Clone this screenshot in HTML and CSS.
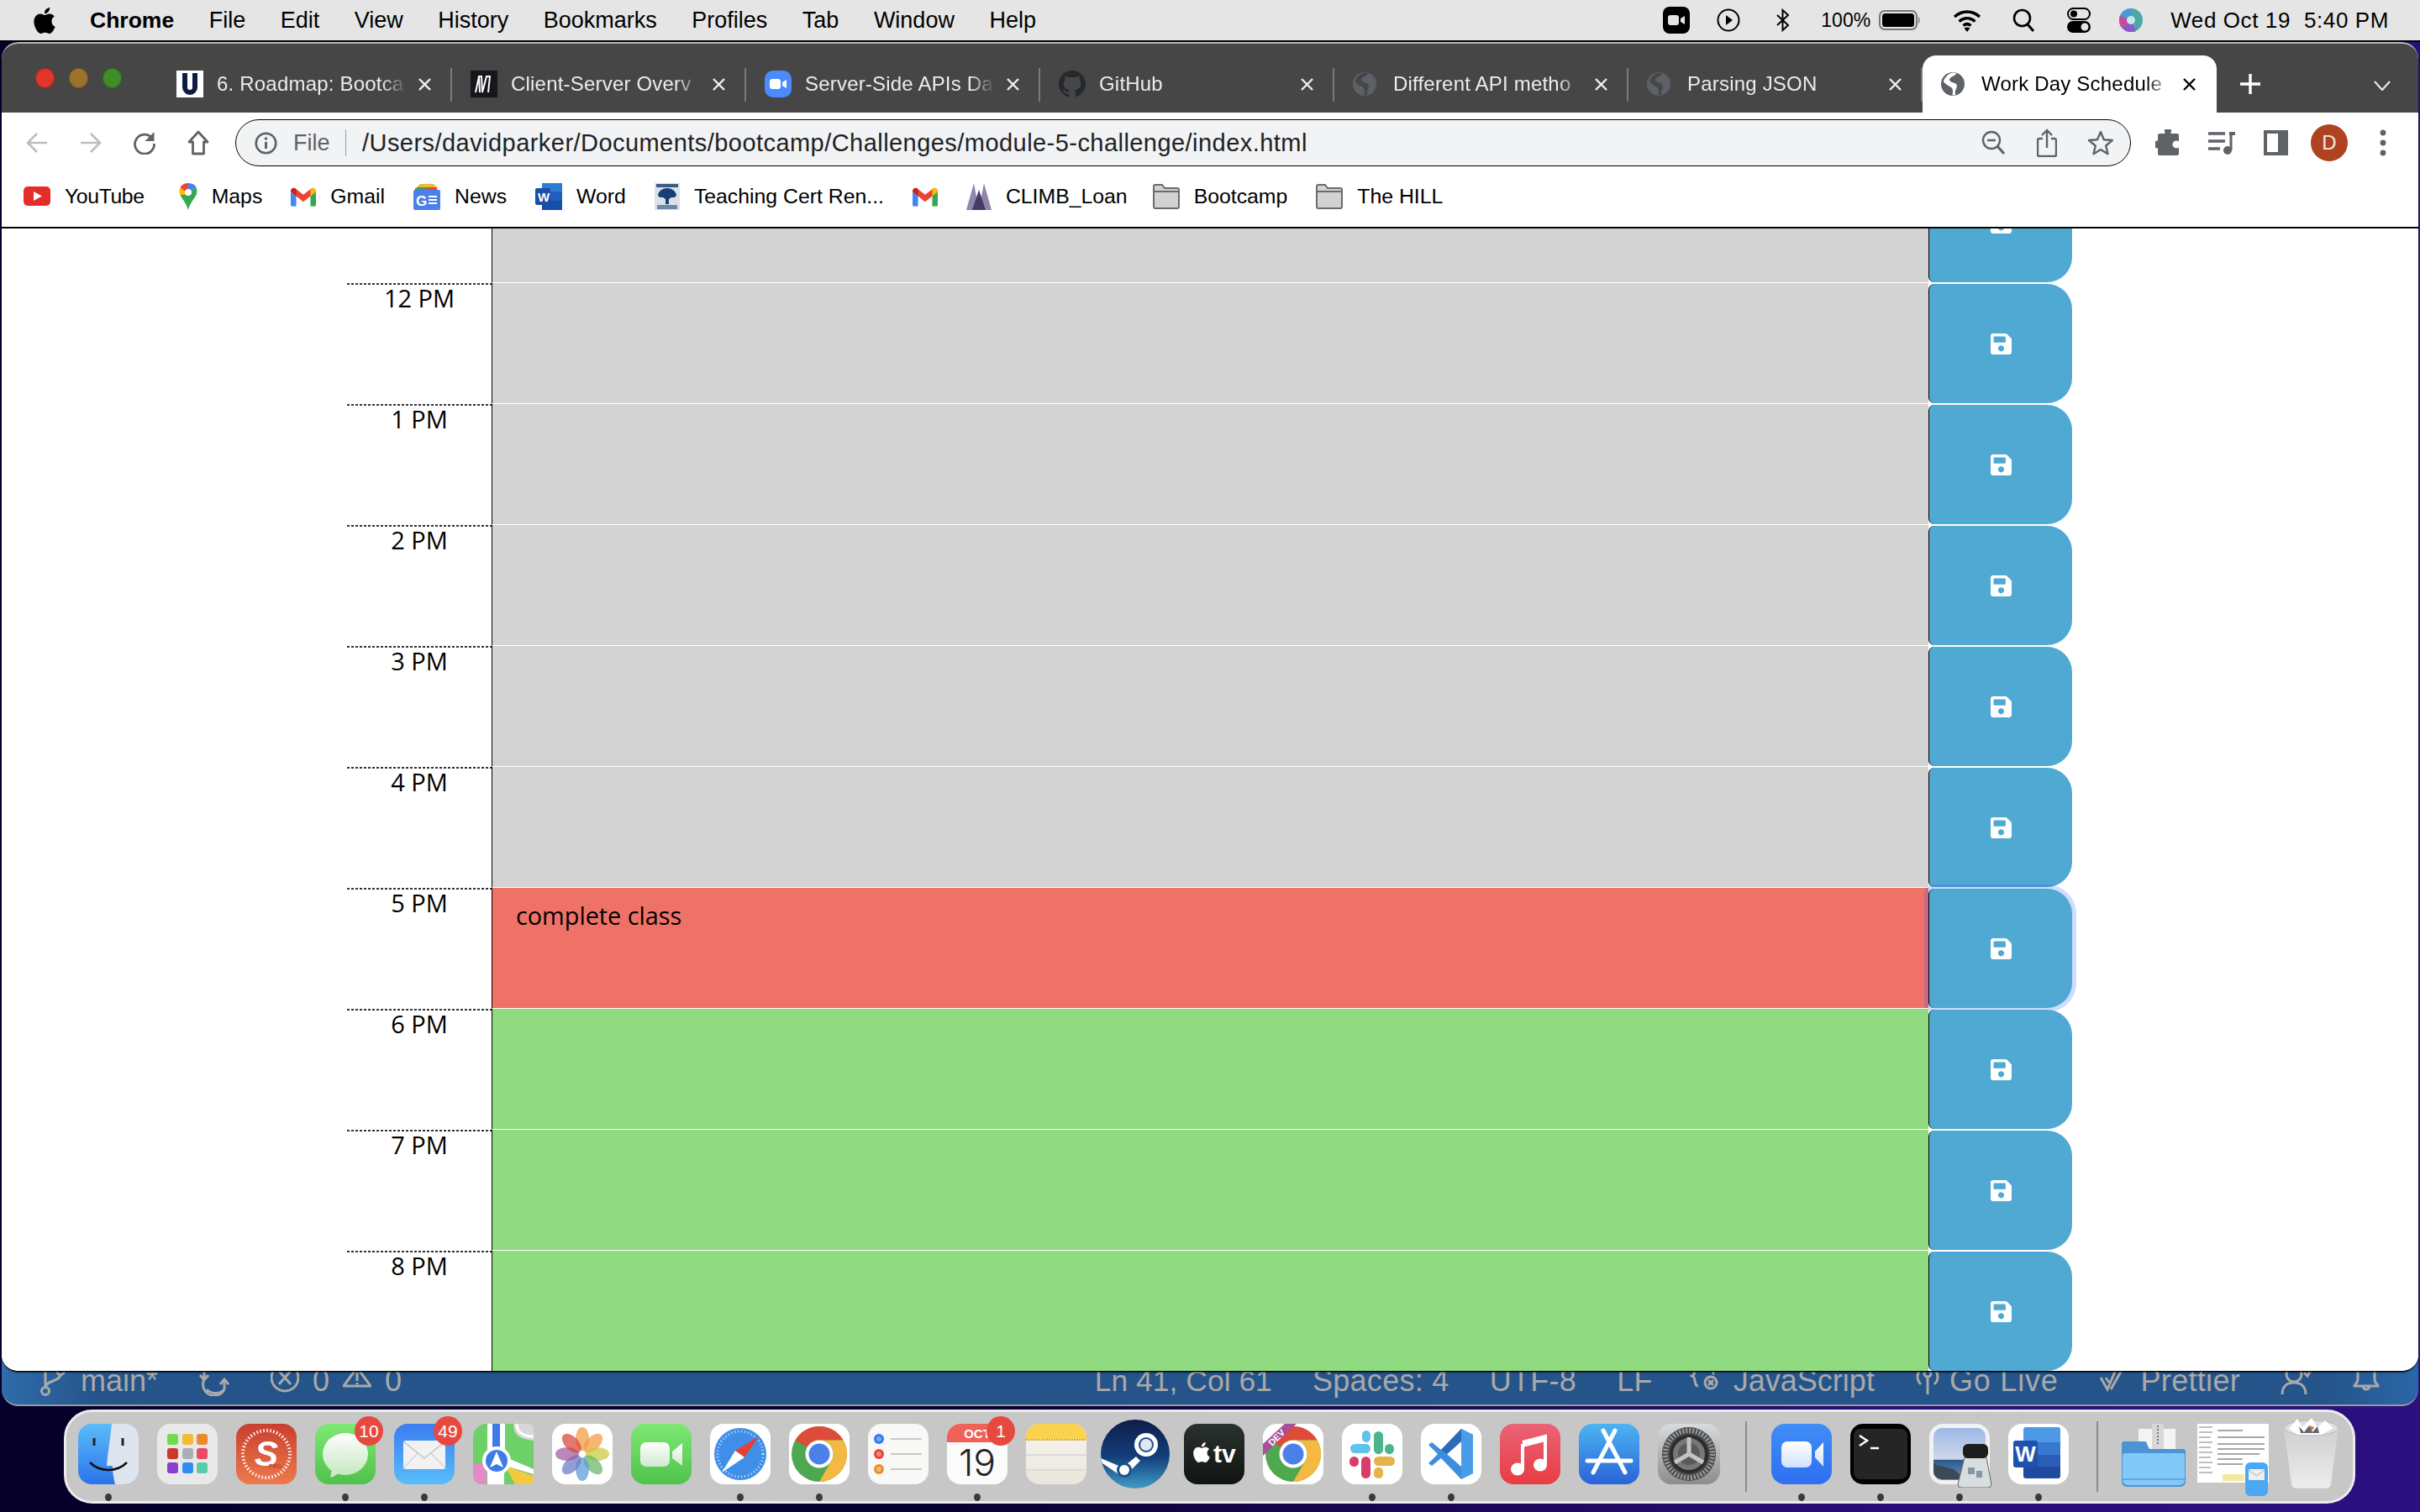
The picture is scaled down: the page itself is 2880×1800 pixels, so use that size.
FILE: index.html
```html
<!DOCTYPE html>
<html lang="en">
<head>
<meta charset="utf-8">
<title>Work Day Scheduler</title>
<link rel="stylesheet" href="styles.css">
</head>
<body>
<svg class="defs" width="0" height="0">
  <defs>
    <symbol id="globe" viewBox="0 0 16 16"><circle class="gb" cx="8" cy="8" r="8"/><path class="gc" d="M10.5 .8C9.5 2.6 6.6 2.8 5.8 4.6 5.2 6.2 7.6 6.8 9.6 7.6c1.6.7 1.4 2.6.5 4.1-.6 1-.7 2.400-.1 3.600l-2.100.500c-.2-1.800.4-3.100-.1-4.400C7.300 10 5.600 9.700 4.600 9 3.400 8.200 2.400 7.400 1.600 6.200 2.600 3.400 5 .8 8 .3c1-.1 1.700.1 2.500.5z"/></symbol>
    <symbol id="close" viewBox="0 0 17 15"><path d="M2 1l13 13M15 1L2 14" fill="none" stroke="currentColor" stroke-width="2.400"/></symbol>
    <symbol id="save" viewBox="0 0 448 512"><path fill="#fff" d="M433.941 129.941l-83.882-83.882A48 48 0 0 0 316.118 32H48C21.49 32 0 53.49 0 80v352c0 26.51 21.49 48 48 48h352c26.51 0 48-21.49 48-48V163.882a48 48 0 0 0-14.059-33.941zM224 416c-35.346 0-64-28.654-64-64 0-35.346 28.654-64 64-64s64 28.654 64 64c0 35.346-28.654 64-64 64zm96-304.520V212c0 6.627-5.373 12-12 12H76c-6.627 0-12-5.373-12-12V108c0-6.627 5.373-12 12-12h228.520c3.183 0 6.235 1.264 8.485 3.515l3.480 3.480A11.996 11.996 0 0 1 320 111.480z"/></symbol>
    <symbol id="gmail" viewBox="0 0 32 24"><path fill="#4285f4" d="M0 5v17a2 2 0 0 0 2 2h5V11z"/><path fill="#34a853" d="M32 5v17a2 2 0 0 1-2 2h-5V11z"/><path fill="#ea4335" d="M0 5c0-4 4-6 7-3l9 7 9-7c3-3 7-1 7 3l-7 6-9 7-9-7z"/><path fill="#fbbc04" d="M25 2c3-3 7-1 7 3l-7 6z"/><path fill="#c5221f" d="M0 5c0-4 4-6 7-3v9z"/></symbol>
    <symbol id="folder" viewBox="0 0 32 30"><path fill="#d2d2d2" stroke="#6b6b6b" stroke-width="2" d="M1 3a2 2 0 0 1 2-2h8l3 4h15a2 2 0 0 1 2 2v20a2 2 0 0 1-2 2H3a2 2 0 0 1-2-2z"/><path stroke="#6b6b6b" stroke-width="2" d="M1 9h30"/></symbol>
    <symbol id="chrome" viewBox="0 0 72 72"><circle cx="36" cy="36" r="33" fill="#4da850"/><path fill="#dd4b39" d="M7.400 19.500A33 33 0 0 1 64.600 19.500H36A16.500 16.500 0 0 0 21.700 27.700z"/><path fill="#f4b942" d="M64.600 19.500H36A16.500 16.500 0 0 1 50.300 44.250L36 69A33 33 0 0 0 64.600 19.500z"/><circle cx="36" cy="36" r="16.500" fill="#fff"/><circle cx="36" cy="36" r="12.500" fill="#4a80e8"/></symbol>
    <linearGradient id="gBlue" x1="0" y1="0" x2="0" y2="1"><stop offset="0" stop-color="#3c7cf0"/><stop offset="1" stop-color="#57bdfb"/></linearGradient>
    <linearGradient id="gGreen" x1="0" y1="0" x2="0" y2="1"><stop offset="0" stop-color="#7fe874"/><stop offset="1" stop-color="#4fc24b"/></linearGradient>
    <linearGradient id="gBub" x1="0" y1="0" x2="0" y2="1"><stop offset="0" stop-color="#fff"/><stop offset="1" stop-color="#c4e8c0"/></linearGradient>
    <linearGradient id="gS" x1="0" y1="0" x2="0" y2="1"><stop offset="0" stop-color="#c8402f"/><stop offset="1" stop-color="#ee7a4c"/></linearGradient>
    <linearGradient id="gFinder" x1="0" y1="0" x2="0" y2="1"><stop offset="0" stop-color="#5cbcf8"/><stop offset="1" stop-color="#2a74ea"/></linearGradient>
    <linearGradient id="gSteam" x1="0" y1="0" x2="0" y2="1"><stop offset="0" stop-color="#0c1d48"/><stop offset=".55" stop-color="#14407c"/><stop offset="1" stop-color="#3f9cc8"/></linearGradient>
    <linearGradient id="gMusic" x1="0" y1="0" x2="0" y2="1"><stop offset="0" stop-color="#ea6478"/><stop offset="1" stop-color="#e83c42"/></linearGradient>
    <linearGradient id="gStore" x1="0" y1="0" x2="0" y2="1"><stop offset="0" stop-color="#4cb4f2"/><stop offset="1" stop-color="#2a62d8"/></linearGradient>
    <linearGradient id="gGear" x1="0" y1="0" x2="0" y2="1"><stop offset="0" stop-color="#d8dcde"/><stop offset="1" stop-color="#8a8c8e"/></linearGradient>
    <linearGradient id="gZoom" x1="0" y1="0" x2="0" y2="1"><stop offset="0" stop-color="#3f8ef8"/><stop offset="1" stop-color="#2e6ff0"/></linearGradient>
    <linearGradient id="gSky" x1="0" y1="0" x2="0" y2="1"><stop offset="0" stop-color="#9cb8e8"/><stop offset=".6" stop-color="#cfd8e8"/><stop offset=".62" stop-color="#2a5a90"/><stop offset="1" stop-color="#6a93b0"/></linearGradient>
    <linearGradient id="gTrash" x1="0" y1="0" x2="0" y2="1"><stop offset="0" stop-color="#cfcfcf"/><stop offset="1" stop-color="#ededed"/></linearGradient>
    <linearGradient id="gTv" x1="0" y1="0" x2="0" y2="1"><stop offset="0" stop-color="#2a322e"/><stop offset="1" stop-color="#101412"/></linearGradient>
    <linearGradient id="gNotes" x1="0" y1="0" x2="0" y2="1"><stop offset="0" stop-color="#f7f5ee"/><stop offset="1" stop-color="#e9e6dc"/></linearGradient>
    <linearGradient id="gFace" x1="0" y1="0" x2="0" y2="1"><stop offset="0" stop-color="#fff"/><stop offset="1" stop-color="#cfe9d0"/></linearGradient>
    <linearGradient id="gZc" x1="0" y1="0" x2="0" y2="1"><stop offset="0" stop-color="#fff"/><stop offset="1" stop-color="#cfe2fb"/></linearGradient>
  </defs>
</svg>

<header class="menubar">
  <svg class="apple" viewBox="2 0 20 24" width="26" height="31"><path fill="#000" d="M12.152 6.896c-.948 0-2.415-1.078-3.960-1.040-2.040.027-3.910 1.183-4.961 3.014-2.117 3.675-.546 9.103 1.519 12.090 1.013 1.454 2.208 3.090 3.792 3.039 1.520-.065 2.090-.987 3.935-.987 1.831 0 2.350.987 3.960.948 1.637-.026 2.676-1.480 3.676-2.948 1.156-1.688 1.636-3.325 1.662-3.415-.039-.013-3.182-1.221-3.220-4.857-.026-3.040 2.480-4.494 2.597-4.559-1.429-2.090-3.623-2.324-4.390-2.376-2-.156-3.675 1.090-4.610 1.090zM15.530 3.830c.843-1.012 1.400-2.427 1.245-3.830-1.207.052-2.662.805-3.532 1.818-.780.896-1.454 2.338-1.273 3.714 1.338.104 2.715-.688 3.559-1.701"/></svg>
  <nav class="menus">
    <span class="menu-app">Chrome</span><span>File</span><span>Edit</span><span>View</span><span>History</span><span>Bookmarks</span><span>Profiles</span><span>Tab</span><span>Window</span><span>Help</span>
  </nav>
  <div class="status-icons">
    <svg class="st-zoom" width="32" height="32" viewBox="0 0 32 32"><rect width="32" height="32" rx="8" fill="#000"/><rect x="6" y="10" width="13" height="12" rx="3" fill="#e5e5e5"/><path fill="#e5e5e5" d="M21 14l5-3v10l-5-3z"/></svg>
    <svg class="st-play" width="28" height="28" viewBox="0 0 28 28"><circle cx="14" cy="14" r="12.500" fill="none" stroke="#000" stroke-width="2"/><path d="M11 8l8 6-8 6z"/></svg>
    <svg class="st-bt" width="18" height="28" viewBox="0 0 18 28"><path d="M2 8l13 12-6.500 6V2L15 8 2 20" fill="none" stroke="#000" stroke-width="2"/></svg>
    <span class="st-pct">100%</span>
    <svg class="st-batt" width="50" height="24" viewBox="0 0 50 24"><rect x="1" y="1" width="44" height="22" rx="6" fill="none" stroke="#777" stroke-width="2"/><rect x="4" y="4" width="38" height="16" rx="3.500" fill="#000"/><path d="M47 8c2 1 2 7 0 8z" fill="#777"/></svg>
    <svg class="st-wifi" width="36" height="28" viewBox="0 0 36 28"><path d="M3 10c9-8 21-8 30 0M8.500 15.500c6-5 13-5 19 0M13.500 20.500c3-2.500 6-2.500 9 0" fill="none" stroke="#000" stroke-width="3.400"/><path d="M18 28l-3.500-4.500c2-1.300 5-1.300 7 0z"/></svg>
    <svg class="st-search" width="27" height="28" viewBox="0 0 27 28"><circle cx="11.500" cy="11.500" r="9.500" fill="none" stroke="#000" stroke-width="2.600"/><path d="M18 19l7 8" stroke="#000" stroke-width="3"/></svg>
    <svg class="st-cc" width="28" height="30" viewBox="0 0 28 30"><rect x="1" y="1" width="26" height="13" rx="6.500" fill="none" stroke="#000" stroke-width="2"/><circle cx="8" cy="7.500" r="4"/><rect y="16" width="28" height="14" rx="7"/><circle cx="21" cy="23" r="4.500" fill="#e5e5e5"/></svg>
    <svg class="st-siri" width="28" height="28" viewBox="0 0 28 28"><circle cx="14" cy="14" r="14" fill="#4aa8a8"/><path d="M14 0a14 14 0 0 0-13 9l13 5z" fill="#4a9ad8"/><path d="M1 9a14 14 0 0 0 3 15l10-10z" fill="#c84a98"/><path d="M4 24a14 14 0 0 0 16 3l-6-13z" fill="#8a5ac8"/><circle cx="14" cy="14" r="5" fill="#c8e8e8"/></svg>
    <span class="st-date">Wed Oct 19</span>
    <span class="st-time">5:40 PM</span>
  </div>
</header>

<main class="window">
  <div class="tabstrip">
    <div class="lights"><span class="light light-r"></span><span class="light light-y"></span><span class="light light-g"></span></div>
    <div class="tab">
      <svg class="fav" width="32" height="32" viewBox="0 0 32 32"><rect width="32" height="32" fill="#fff"/><path d="M7 3v17a9 9 0 0 0 18 0V3h-6v17a3 3 0 0 1-6 0V3z" fill="#0f1b47"/></svg>
      <span class="title">6. Roadmap: Bootca</span>
      <svg class="x" width="17" height="15"><use href="#close"/></svg>
    </div>
    <div class="tab">
      <svg class="fav" width="32" height="32" viewBox="0 0 32 32"><rect width="32" height="32" fill="#16161d"/><path d="M6 26L10 7h3l1 19 5-19h3l1 0-2 19M10 7l1 19" fill="none" stroke="#fff" stroke-width="2"/></svg>
      <span class="title">Client-Server Overv</span>
      <svg class="x" width="17" height="15"><use href="#close"/></svg>
    </div>
    <div class="tab">
      <svg class="fav" width="32" height="32" viewBox="0 0 32 32"><rect width="32" height="32" rx="10" fill="#4a8cff"/><rect x="6" y="10" width="13" height="12" rx="3" fill="#fff"/><path d="M21 14l5-3v10l-5-3z" fill="#fff"/></svg>
      <span class="title">Server-Side APIs Da</span>
      <svg class="x" width="17" height="15"><use href="#close"/></svg>
    </div>
    <div class="tab">
      <svg class="fav" width="32" height="32" viewBox="0 0 16 16"><path fill="#24292e" d="M8 0C3.580 0 0 3.580 0 8c0 3.540 2.290 6.530 5.470 7.590.400.070.550-.170.550-.380 0-.190-.010-.820-.010-1.490-2.010.370-2.530-.490-2.690-.940-.090-.230-.480-.940-.820-1.130-.280-.150-.680-.520-.010-.530.630-.010 1.080.580 1.230.820.720 1.210 1.870.870 2.330.660.070-.520.280-.870.510-1.070-1.780-.200-3.640-.890-3.640-3.950 0-.870.310-1.590.820-2.150-.080-.200-.360-1.020.080-2.120 0 0 .670-.210 2.200.820.640-.180 1.320-.270 2-.270.680 0 1.360.090 2 .270 1.530-1.040 2.200-.820 2.200-.820.440 1.100.160 1.920.080 2.120.510.560.820 1.270.820 2.150 0 3.070-1.870 3.750-3.650 3.950.290.250.540.730.540 1.480 0 1.070-.010 1.930-.010 2.200 0 .210.150.460.550.380A8.013 8.013 0 0016 8c0-4.420-3.580-8-8-8z"/></svg>
      <span class="title">GitHub</span>
      <svg class="x" width="17" height="15"><use href="#close"/></svg>
    </div>
    <div class="tab">
      <svg class="fav fav-g" width="28" height="32"><use href="#globe"/></svg>
      <span class="title">Different API metho</span>
      <svg class="x" width="17" height="15"><use href="#close"/></svg>
    </div>
    <div class="tab">
      <svg class="fav fav-g" width="28" height="32"><use href="#globe"/></svg>
      <span class="title">Parsing JSON</span>
      <svg class="x" width="17" height="15"><use href="#close"/></svg>
    </div>
    <div class="tab tab-active">
      <svg class="fav fav-g" width="28" height="32"><use href="#globe"/></svg>
      <span class="title">Work Day Schedule</span>
      <svg class="x" width="17" height="15"><use href="#close"/></svg>
    </div>
    <svg class="newtab" width="26" height="26" viewBox="0 0 26 26"><path d="M13 1v24M1 13h24" stroke="#fff" stroke-width="3.400"/></svg>
    <svg class="tabmenu" width="20" height="12" viewBox="0 0 20 12"><path d="M1 1l9 10 9-10" fill="none" stroke="#e8e8e8" stroke-width="2.200"/></svg>
  </div>

  <div class="toolbar">
    <span class="tb-btn"><svg width="26" height="28" viewBox="0 0 26 28"><path d="M25 14H3M13 3L2 14l11 11" fill="none" stroke="#bdbdbd" stroke-width="2.600"/></svg></span>
    <span class="tb-btn"><svg width="26" height="28" viewBox="0 0 26 28"><path d="M1 14h22M13 3l11 11-11 11" fill="none" stroke="#bdbdbd" stroke-width="2.600"/></svg></span>
    <span class="tb-btn"><svg width="28" height="28" viewBox="0 0 28 28"><path d="M23 8.500A11.500 11.500 0 1 0 25.500 15" fill="none" stroke="#5f6368" stroke-width="2.800"/><path d="M25.500 1v11h-11z" fill="#5f6368"/></svg></span>
    <span class="tb-btn"><svg width="26" height="30" viewBox="0 0 26 30"><path d="M13 2L2 14h4.500v14h13V14H24z" fill="none" stroke="#5f6368" stroke-width="2.800" stroke-linejoin="round"/></svg></span>
    <div class="omnibox">
      <svg class="o-info" width="27" height="27" viewBox="0 0 27 27"><circle cx="13.500" cy="13.500" r="11.800" fill="none" stroke="#5f6368" stroke-width="2.600"/><path d="M13.500 12v8" stroke="#5f6368" stroke-width="3"/><circle cx="13.500" cy="8" r="1.800" fill="#5f6368"/></svg>
      <span class="o-file">File</span>
      <span class="o-sep"></span>
      <span class="o-url">/Users/davidparker/Documents/bootcamp/Challenges/module-5-challenge/index.html</span>
      <span class="o-act"><svg width="28" height="30" viewBox="0 0 28 30"><circle cx="12" cy="12" r="10" fill="none" stroke="#5f6368" stroke-width="2.400"/><path d="M7 12h10" stroke="#5f6368" stroke-width="2.400"/><path d="M19 19l8 9" stroke="#5f6368" stroke-width="3"/></svg></span>
      <span class="o-act"><svg width="24" height="34" viewBox="0 0 24 34"><path d="M7 12H3a2 2 0 0 0-2 2v17a2 2 0 0 0 2 2h18a2 2 0 0 0 2-2V14a2 2 0 0 0-2-2h-4M12 23V2M6 8l6-6 6 6" fill="none" stroke="#5f6368" stroke-width="2.400"/></svg></span>
      <span class="o-act"><svg width="30" height="30" viewBox="0 0 30 30"><path d="M15 2l3.800 9.200 10 .8-7.600 6.500 2.300 9.700-8.500-5.200-8.500 5.200 2.300-9.700L.9 12l10-.8z" fill="none" stroke="#5f6368" stroke-width="2.400" stroke-linejoin="round"/></svg></span>
    </div>
    <span class="tb-btn tb-first"><svg width="30" height="32" viewBox="0 0 30 32"><path fill="#5f6368" d="M11 2a4 4 0 0 1 8 0c0 1-.500 2-.500 3H26a2 2 0 0 1 2 2v7c-1 0-2-.600-3-.600a4.500 4.500 0 0 0 0 9c1 0 2-.400 3-.400v7a2 2 0 0 1-2 2H5a2 2 0 0 1-2-2v-7c-1 0 0 .500-1 .500a4.500 4.500 0 0 1 0-9c1 0 0 .500 1 .500V7a2 2 0 0 1 2-2h6.500c0-1-.500-2-.500-3z"/></svg></span>
    <span class="tb-btn"><svg width="32" height="32" viewBox="0 0 32 32"><path d="M0 5h20M0 14h20M0 23h14" stroke="#5f6368" stroke-width="3.400"/><path d="M27 3v22" stroke="#5f6368" stroke-width="3"/><path d="M25 3h7v4h-7z" fill="#5f6368"/><circle cx="23" cy="25" r="5" fill="#5f6368"/></svg></span>
    <span class="tb-btn"><svg width="29" height="30" viewBox="0 0 29 30"><path fill="#5f6368" fill-rule="evenodd" d="M0 0h29v30H0zM4 4v22h13V4z"/></svg></span>
    <span class="tb-btn"><span class="avatar">D</span></span>
    <span class="tb-btn"><svg width="8" height="32" viewBox="0 0 8 32"><circle cx="4" cy="4" r="3.400" fill="#5f6368"/><circle cx="4" cy="16" r="3.400" fill="#5f6368"/><circle cx="4" cy="28" r="3.400" fill="#5f6368"/></svg></span>
  </div>

  <div class="bookmarks">
    <a class="bm bm-yt"><svg width="32" height="24" viewBox="0 0 32 24"><rect width="32" height="23" rx="5" fill="#e52d27"/><path d="M12 6l10 5.500L12 17z" fill="#fff"/></svg>YouTube</a>
    <a class="bm bm-maps"><svg width="22" height="32" viewBox="0 0 22 32"><path fill="#4285f4" d="M11 0c4 0 7 1.500 9 4L11 14z"/><path fill="#ea4335" d="M11 0C7 0 3.500 1.500 1.500 5L11 14z"/><path fill="#fbbc04" d="M1.500 5C0 8 0 11 1.500 14L11 14z"/><path fill="#34a853" d="M1.500 14c2 5 7 9 9.500 18 2.500-9 7-13 9.500-18 1.500-4 1-7-.500-10L11 14z"/><circle cx="11" cy="11" r="4" fill="#fff"/></svg>Maps</a>
    <a class="bm"><svg width="30" height="23" viewBox="0 0 32 24"><use href="#gmail"/></svg>Gmail</a>
    <a class="bm"><svg width="32" height="32" viewBox="0 0 32 32"><path fill="#e9b93a" d="M3 6l5-5h16l5 5z"/><path fill="#ea4335" d="M4 5h24v4H4z"/><path fill="#34a853" d="M2 6h14v4H2z"/><rect y="8" width="32" height="24" rx="2" fill="#4a80e8"/><text class="news-g" x="3" y="27">G</text><path d="M18 16h10M18 20h10M18 24h10" stroke="#fff" stroke-width="2"/></svg>News</a>
    <a class="bm"><svg width="32" height="32" viewBox="0 0 32 32"><path fill="#2b7cd3" d="M8 0h24v10H8z"/><path fill="#1e5fbf" d="M8 10h24v11H8z"/><path fill="#174ea6" d="M8 21h24v11H8z"/><rect y="6" width="18" height="20" rx="2" fill="#1d4fa8"/><text class="word-w" x="3" y="22">W</text></svg>Word</a>
    <a class="bm"><svg width="30" height="32" viewBox="0 0 30 32"><rect width="30" height="32" fill="#d9e1ea"/><rect x="2" y="1" width="26" height="4" fill="#395e8a"/><rect x="3" y="26" width="24" height="5" fill="#6b88a8"/><path d="M15 6c-5 0-10 3-11 8 1 4 4 3 6 3l3 2v6h4v-6l3-2c2 0 5 1 6-3-1-5-6-8-11-8z" fill="#173f74"/></svg>Teaching Cert Ren...</a>
    <a class="bm"><svg width="30" height="23" viewBox="0 0 32 24"><use href="#gmail"/></svg></a>
    <a class="bm"><svg width="30" height="32" viewBox="0 0 30 32"><path fill="#8f85ad" d="M9 0l6 32H0zM21 0l9 32H15z"/><path fill="#453c66" d="M15 8l8 24H7z"/></svg>CLIMB_Loan</a>
    <a class="bm bm-boot"><svg width="32" height="30"><use href="#folder"/></svg>Bootcamp</a>
    <a class="bm"><svg width="32" height="30"><use href="#folder"/></svg>The HILL</a>
  </div>

  <section class="page">
    <div class="rows">
      <div class="row past"><div class="hour">11 AM</div><div class="desc"></div><button class="save" type="button"><svg width="25" height="29"><use href="#save"/></svg></button></div>
      <div class="row past"><div class="hour">12 PM</div><div class="desc"></div><button class="save" type="button"><svg width="25" height="29"><use href="#save"/></svg></button></div>
      <div class="row past"><div class="hour">1 PM</div><div class="desc"></div><button class="save" type="button"><svg width="25" height="29"><use href="#save"/></svg></button></div>
      <div class="row past"><div class="hour">2 PM</div><div class="desc"></div><button class="save" type="button"><svg width="25" height="29"><use href="#save"/></svg></button></div>
      <div class="row past"><div class="hour">3 PM</div><div class="desc"></div><button class="save" type="button"><svg width="25" height="29"><use href="#save"/></svg></button></div>
      <div class="row past"><div class="hour">4 PM</div><div class="desc"></div><button class="save" type="button"><svg width="25" height="29"><use href="#save"/></svg></button></div>
      <div class="row present"><div class="hour">5 PM</div><div class="desc">complete class</div><button class="save save-focus" type="button"><svg width="25" height="29"><use href="#save"/></svg></button></div>
      <div class="row future"><div class="hour">6 PM</div><div class="desc"></div><button class="save" type="button"><svg width="25" height="29"><use href="#save"/></svg></button></div>
      <div class="row future"><div class="hour">7 PM</div><div class="desc"></div><button class="save" type="button"><svg width="25" height="29"><use href="#save"/></svg></button></div>
      <div class="row future"><div class="hour">8 PM</div><div class="desc"></div><button class="save" type="button"><svg width="25" height="29"><use href="#save"/></svg></button></div>
    </div>
  </section>
</main>

<footer class="statusbar">
  <div class="sb-group sb-left">
    <span class="sb-item sb-branch"><svg width="30" height="36" viewBox="0 0 30 36"><circle cx="6" cy="30" r="4.500"/><circle cx="24" cy="6" r="4.500"/><path d="M6 0v25M24 10c0 9-18 7-18 16"/></svg>main*</span>
    <span class="sb-item"><svg width="38" height="36" viewBox="0 0 38 36"><path d="M7 4v12a12 12 0 0 0 24 12M31 28V16M2 11l5 6 5-6M26 22l5-6 5 6M10 28c6 6 16 6 21 0"/></svg></span>
    <span class="sb-item sb-problems"><svg width="34" height="36" viewBox="0 0 34 36"><circle cx="17" cy="14" r="16"/><path d="M10 6l14 16M24 6L10 22"/></svg>0<svg width="34" height="36" viewBox="0 0 34 36"><path d="M17 2L1 24h32zM17 8v10M17 20v2"/></svg>0</span>
  </div>
  <div class="sb-group sb-right">
    <span class="sb-item sb-ln">Ln 41, Col 61</span>
    <span class="sb-item">Spaces: 4</span>
    <span class="sb-item">UTF-8</span>
    <span class="sb-item">LF</span>
    <span class="sb-item sb-js"><svg width="36" height="36" viewBox="0 0 36 36"><path d="M10 0c-6 0-2 10-7 12 5 2 1 12 7 12"/><path d="M24 0c4 1 2 8 5 10"/><circle cx="25" cy="20" r="7"/><path d="M22 17l6 6M28 17l-6 6"/></svg>JavaScript</span>
    <span class="sb-item sb-live"><svg width="30" height="36" viewBox="0 0 30 36"><path d="M7 22a12 12 0 1 1 16 0M15 14v20"/><circle cx="15" cy="9" r="4"/></svg>Go Live</span>
    <span class="sb-item"><svg width="32" height="36" viewBox="0 0 32 36"><path d="M2 14l8 14L22 0M8 14l4 6M14 28L30 0"/></svg>Prettier</span>
    <span class="sb-item"><svg width="38" height="36" viewBox="0 0 38 36"><circle cx="16" cy="10" r="9"/><path d="M2 34c0-10 6-14 14-14s14 4 14 14M28 8l4 4 5-8"/></svg></span>
    <span class="sb-item"><svg width="32" height="36" viewBox="0 0 32 36"><path d="M6 0v16c0 5-4 6-4 8h28c0-2-4-3-4-8V0M12 24a4 4 0 0 0 8 0"/></svg></span>
  </div>
</footer>

<nav class="dock">
  <div class="dock-item on"><svg width="72" height="72" viewBox="0 0 72 72"><rect width="72" height="72" rx="16" fill="url(#gFinder)"/><path d="M40 0h16a16 16 0 0 1 16 16v40a16 16 0 0 1-16 16H44c-2-8-3-14-3-22H34c1-14 4-30 6-50z" fill="#dfe5ef"/><path d="M19 17v9M53 17v9" stroke="#222" stroke-width="3"/><path d="M14 46c12 12 32 12 44 0" fill="none" stroke="#111" stroke-width="2.500"/></svg></div>
  <div class="dock-item"><svg width="72" height="72" viewBox="0 0 72 72"><rect width="72" height="72" rx="16" fill="#e9e9e9"/><rect x="12" y="12" width="13" height="13" rx="3" fill="#6fdc4a"/><rect x="30" y="12" width="13" height="13" rx="3" fill="#f4bc34"/><rect x="47" y="12" width="13" height="13" rx="3" fill="#e98a2c"/><rect x="12" y="29" width="13" height="13" rx="3" fill="#c93a2a"/><rect x="30" y="29" width="13" height="13" rx="3" fill="#a9b0b5"/><rect x="47" y="29" width="13" height="13" rx="3" fill="#ea4b63"/><rect x="12" y="46" width="13" height="13" rx="3" fill="#8a3ed0"/><rect x="30" y="46" width="13" height="13" rx="3" fill="#2f8df5"/><rect x="47" y="46" width="13" height="13" rx="3" fill="#58cdaa"/></svg></div>
  <div class="dock-item"><svg width="72" height="72" viewBox="0 0 72 72"><rect width="72" height="72" rx="16" fill="url(#gS)"/><circle cx="36" cy="36" r="28" fill="none" stroke="#fff" stroke-width="4" stroke-dasharray="1.500 2.500"/><text class="s-big" x="36" y="50">S</text><text class="s-pro" x="39" y="53">PRO</text></svg></div>
  <div class="dock-item on"><svg width="72" height="72" viewBox="0 0 72 72"><rect width="72" height="72" rx="16" fill="url(#gGreen)"/><ellipse cx="36" cy="36" rx="27" ry="25" fill="url(#gBub)"/><path d="M20 54l-2 10c4-1 9-4 12-7z" fill="#cfeacb"/></svg><span class="badge">10</span></div>
  <div class="dock-item on"><svg width="72" height="72" viewBox="0 0 72 72"><rect width="72" height="72" rx="16" fill="url(#gBlue)"/><rect x="11" y="20" width="50" height="34" rx="3" fill="#f2f2f2"/><path d="M11 21l25 20 25-20" fill="none" stroke="#bfc6cc" stroke-width="1.500"/><path d="M11 53l17-18M61 53L44 35" stroke="#d0d5da" stroke-width="1.500"/></svg><span class="badge">49</span></div>
  <div class="dock-item"><svg width="72" height="72" viewBox="0 0 72 72"><rect width="72" height="72" rx="16" fill="#6dd068"/><path d="M48 0c0 14 8 18 24 20V6a6 6 0 0 0-6-6z" fill="#d8d8d8"/><path d="M52 0c0 11 9 15 20 15" fill="none" stroke="#fff" stroke-width="3"/><path d="M17 0h21v40H17z" fill="#fff"/><path d="M23 0h9v36h-9z" fill="#3f7be8"/><path d="M0 48l16-2v26H10A10 10 0 0 1 0 62z" fill="#e58ac8"/><path d="M17 46h20v26H17z" fill="#fff"/><path d="M38 50l34 12v4a6 6 0 0 1-6 6H50z" fill="#f5c93f"/><path d="M38 50l34 10v-6L44 42z" fill="#fff"/><circle cx="28" cy="44" r="17" fill="#fff"/><circle cx="28" cy="44" r="13" fill="#3f7be8"/><path d="M28 33l8 19-8-4-8 4z" fill="#fff"/></svg></div>
  <div class="dock-item"><svg width="72" height="72" viewBox="0 0 72 72"><rect width="72" height="72" rx="16" fill="#fff"/><g fill-opacity=".72"><ellipse cx="36" cy="18" rx="8" ry="14" fill="#f29a3c"/><ellipse cx="36" cy="18" rx="8" ry="14" fill="#f29a3c" transform="rotate(45 36 36)"/><ellipse cx="36" cy="18" rx="8" ry="14" fill="#c7cc3c" transform="rotate(90 36 36)"/><ellipse cx="36" cy="18" rx="8" ry="14" fill="#6cb46a" transform="rotate(135 36 36)"/><ellipse cx="36" cy="18" rx="8" ry="14" fill="#5a9ad8" transform="rotate(180 36 36)"/><ellipse cx="36" cy="18" rx="8" ry="14" fill="#6a78c4" transform="rotate(225 36 36)"/><ellipse cx="36" cy="18" rx="8" ry="14" fill="#a05aa0" transform="rotate(270 36 36)"/><ellipse cx="36" cy="18" rx="8" ry="14" fill="#d8443a" transform="rotate(315 36 36)"/></g></svg></div>
  <div class="dock-item"><svg width="72" height="72" viewBox="0 0 72 72"><rect width="72" height="72" rx="16" fill="url(#gGreen)"/><rect x="11" y="22" width="35" height="29" rx="7" fill="url(#gFace)"/><path d="M49 33l12-10v27L49 41z" fill="url(#gFace)"/></svg></div>
  <div class="dock-item on"><svg width="72" height="72" viewBox="0 0 72 72"><rect width="72" height="72" rx="16" fill="#fff"/><circle cx="36" cy="36" r="31" fill="#3f8fe8"/><circle cx="36" cy="36" r="27" fill="none" stroke="#cfe4fa" stroke-width="3" stroke-dasharray="1 3"/><path d="M58 15L30 32l11 8z" fill="#e8402e"/><path d="M14 58l16-26 11 8z" fill="#fff"/></svg></div>
  <div class="dock-item on"><svg width="72" height="72" viewBox="0 0 72 72"><rect width="72" height="72" rx="16" fill="#fff"/><use href="#chrome"/></svg></div>
  <div class="dock-item"><svg width="72" height="72" viewBox="0 0 72 72"><rect width="72" height="72" rx="16" fill="#f8f8f6"/><circle cx="13" cy="18" r="6" fill="#2f7cf0"/><circle cx="13" cy="18" r="3" fill="#fff" fill-opacity=".35"/><circle cx="13" cy="36" r="6" fill="#e8453a"/><circle cx="13" cy="36" r="3" fill="#fff" fill-opacity=".35"/><circle cx="13" cy="54" r="6" fill="#e8902a"/><circle cx="13" cy="54" r="3" fill="#fff" fill-opacity=".35"/><path d="M27 18h37M27 36h37M27 54h37" stroke="#c8c8c8" stroke-width="2"/></svg></div>
  <div class="dock-item on"><svg width="72" height="72" viewBox="0 0 72 72"><rect width="72" height="72" rx="16" fill="#fbfbfb"/><path d="M0 22V16A16 16 0 0 1 16 0h40a16 16 0 0 1 16 16v6z" fill="#ee6257"/><text class="cal-m" x="36" y="17">OCT</text><text class="cal-d" x="36" y="62">19</text></svg><span class="badge badge-cal">1</span></div>
  <div class="dock-item"><svg width="72" height="72" viewBox="0 0 72 72"><rect width="72" height="72" rx="16" fill="url(#gNotes)"/><path d="M0 18V16A16 16 0 0 1 16 0h40a16 16 0 0 1 16 16v2z" fill="#fbd24e"/><path d="M0 19h72" stroke="#c9a83a" stroke-width="2" stroke-dasharray="2 1"/><path d="M0 37h72M0 55h72" stroke="#dcdad2" stroke-width="2"/></svg></div>
  <div class="dock-item dock-steam"><svg width="82" height="82" viewBox="0 0 82 82"><ellipse cx="41" cy="41" rx="41" ry="41" fill="url(#gSteam)"/><circle cx="54" cy="30" r="14" fill="#fff"/><circle cx="54" cy="30" r="9" fill="#1a4f8a"/><circle cx="54" cy="30" r="7" fill="#dfe8f0"/><path d="M0 46l26 11 16-13 5 5-20 20L2 52z" fill="#fff"/><circle cx="28" cy="60" r="9" fill="#1a4f8a"/><circle cx="28" cy="60" r="6" fill="#fff"/></svg></div>
  <div class="dock-item"><svg width="72" height="72" viewBox="0 0 72 72"><rect width="72" height="72" rx="16" fill="url(#gTv)"/><g transform="translate(9 22) scale(1)"><path fill="#fff" d="M12.152 6.896c-.948 0-2.415-1.078-3.960-1.040-2.040.027-3.910 1.183-4.961 3.014-2.117 3.675-.546 9.103 1.519 12.090 1.013 1.454 2.208 3.090 3.792 3.039 1.520-.065 2.090-.987 3.935-.987 1.831 0 2.350.987 3.960.948 1.637-.026 2.676-1.480 3.676-2.948 1.156-1.688 1.636-3.325 1.662-3.415-.039-.013-3.182-1.221-3.220-4.857-.026-3.040 2.480-4.494 2.597-4.559-1.429-2.090-3.623-2.324-4.390-2.376-2-.156-3.675 1.090-4.610 1.090zM15.530 3.830c.843-1.012 1.400-2.427 1.245-3.830-1.207.052-2.662.805-3.532 1.818-.780.896-1.454 2.338-1.273 3.714 1.338.104 2.715-.688 3.559-1.701"/></g><text class="tv" x="35" y="46">tv</text></svg></div>
  <div class="dock-item"><svg width="72" height="72" viewBox="0 0 72 72"><rect width="72" height="72" rx="16" fill="#fff"/><use href="#chrome"/><path d="M0 38L40 0H26L0 24z" fill="#a8509a"/><text class="dev" x="11" y="27" transform="rotate(-45 11 27)">DEV</text></svg></div>
  <div class="dock-item on"><svg width="72" height="72" viewBox="0 0 72 72"><rect width="72" height="72" rx="16" fill="#fff"/><rect x="10" y="24" width="24" height="11" rx="5.500" fill="#5ec4ec"/><rect x="24" y="8" width="10" height="14" rx="5" fill="#5ec4ec"/><rect x="38" y="9" width="11" height="27" rx="5.500" fill="#4cb58c"/><rect x="51" y="24" width="11" height="12" rx="5.500" fill="#4cb58c"/><rect x="38" y="39" width="25" height="11" rx="5.500" fill="#e4b34a"/><rect x="38" y="52" width="11" height="13" rx="5" fill="#e4b34a"/><rect x="23" y="39" width="11" height="26" rx="5.500" fill="#d83c68"/><rect x="9" y="39" width="11" height="12" rx="5.500" fill="#d83c68"/></svg></div>
  <div class="dock-item on"><svg width="72" height="72" viewBox="0 0 72 72"><rect width="72" height="72" rx="16" fill="#fff"/><path d="M48 6L24 31 13 22l-4 3 11 11L9 47l4 3 11-9 24 25 14-7V13zM48 21v30L31 36z" fill="#3e8ede" fill-rule="evenodd"/><path d="M48 6l14 7v46l-14 7z" fill="#4a9ce8"/><path d="M48 6v15L31 36l-7-5z" fill="#2a6cb8"/></svg></div>
  <div class="dock-item"><svg width="72" height="72" viewBox="0 0 72 72"><rect width="72" height="72" rx="16" fill="url(#gMusic)"/><path d="M27 22l27-7v33" fill="none" stroke="#fff" stroke-width="4"/><path d="M27 24v30" stroke="#fff" stroke-width="4"/><path d="M27 21l27-7v7l-27 7z" fill="#fff"/><ellipse cx="21" cy="54" rx="8" ry="7.500" fill="#fff"/><ellipse cx="48" cy="49" rx="8" ry="7.500" fill="#fff"/></svg></div>
  <div class="dock-item"><svg width="72" height="72" viewBox="0 0 72 72"><rect width="72" height="72" rx="16" fill="url(#gStore)"/><path d="M29 8l26 50M43 8L17 58" stroke="#fff" stroke-width="5" stroke-linecap="round"/><path d="M10 44h52" stroke="#fff" stroke-width="5" stroke-linecap="round"/></svg></div>
  <div class="dock-item"><svg width="74" height="72" viewBox="0 0 74 72"><rect width="74" height="72" rx="16" fill="url(#gGear)"/><circle cx="37" cy="36" r="32" fill="#4a4a4a"/><circle cx="37" cy="36" r="28" fill="none" stroke="#9a9a9a" stroke-width="6" stroke-dasharray="2 2"/><circle cx="37" cy="36" r="21" fill="#777" stroke="#2c2c2c" stroke-width="4"/><circle cx="37" cy="36" r="13" fill="#5a5a5a"/><path d="M37 36V16M37 36L20 46M37 36l17 10" stroke="#c4c4c4" stroke-width="5"/></svg></div>
  <span class="dock-sep dock-sep-a"></span>
  <div class="dock-item on"><svg width="72" height="72" viewBox="0 0 72 72"><rect width="72" height="72" rx="16" fill="url(#gZoom)"/><rect x="12" y="21" width="36" height="31" rx="7" fill="url(#gZc)"/><path d="M52 33l10-11v29L52 40z" fill="url(#gZc)"/></svg></div>
  <div class="dock-item on"><svg width="72" height="72" viewBox="0 0 72 72"><rect width="72" height="72" rx="15" fill="#000"/><rect x="4" y="6" width="64" height="60" rx="8" fill="#252525"/><path d="M11 14l9 6-9 6" fill="none" stroke="#fff" stroke-width="2.500"/><path d="M24 29h10" stroke="#fff" stroke-width="2.500"/></svg></div>
  <div class="dock-item on"><svg width="78" height="76" viewBox="0 0 78 76"><rect width="72" height="72" rx="16" fill="#f2f2f2"/><rect x="5" y="5" width="62" height="62" rx="10" fill="url(#gSky)"/><path d="M5 48l24 6 14 12H15A10 10 0 0 1 5 56z" fill="#3b4a55"/><path d="M42 40h26l6 32a4 4 0 0 1-4 4H38a4 4 0 0 1-4-4z" fill="#d8dde0" stroke="#666" stroke-width="1"/><rect x="40" y="24" width="30" height="17" rx="6" fill="#1d1d1d"/><path d="M46 52h8v8h-8zM56 56h7v8h-7z" fill="#8896a4"/></svg></div>
  <div class="dock-item on"><svg width="72" height="72" viewBox="0 0 72 72"><rect width="72" height="72" rx="16" fill="#fff"/><path d="M18 22V7a3 3 0 0 1 3-3h38a3 3 0 0 1 3 3v15z" fill="#4e9ae6"/><path d="M18 22h44v15H18z" fill="#3a78d0"/><path d="M18 37h44v14H18z" fill="#2a5cb8"/><path d="M18 51h44v11a3 3 0 0 1-3 3H21a3 3 0 0 1-3-3z" fill="#1f4aa0"/><rect x="6" y="20" width="29" height="32" rx="3" fill="#1e52ae"/><text class="w-big" x="20.500" y="45">W</text></svg></div>
  <span class="dock-sep dock-sep-b"></span>
  <div class="dock-item dock-folder"><svg width="76" height="76" viewBox="0 0 76 76"><rect x="20" y="6" width="44" height="30" fill="#f4f4f4"/><path d="M36 0h14v30H36z" fill="#d8d8d8"/><path d="M43 2v24" stroke="#777" stroke-width="2" stroke-dasharray="2 2"/><path d="M0 24a3 3 0 0 1 3-3h24a3 3 0 0 1 3 3l3 6h40a3 3 0 0 1 3 3v36a6 6 0 0 1-6 6H6a6 6 0 0 1-6-6z" fill="#4c94d4"/><path d="M1 38a3 3 0 0 1 3-3h68a3 3 0 0 1 3 3v29a6 6 0 0 1-6 6H7a6 6 0 0 1-6-6z" fill="#82c8f8"/><path d="M1 66h74" stroke="#62a8e0" stroke-width="2"/></svg></div>
  <div class="dock-item dock-doc"><svg width="85" height="86" viewBox="0 0 85 86"><rect y="0" width="85" height="70" fill="#fff"/><path d="M2 4h16M2 10h16M2 16h14M2 22h16M2 28h14M2 34h16M2 40h14M2 46h16M2 52h14M2 58h16" stroke="#aaa" stroke-width="1.500"/><path d="M24 8h30M24 16h56M24 24h56M24 30h56M24 36h50M24 42h30M24 48h30" stroke="#8a8a8a" stroke-width="1.500"/><path d="M30 60h26v8H30z" fill="#f3e9a0"/><rect x="57" y="46" width="27" height="40" rx="6" fill="#4aa8f4"/><rect x="61" y="54" width="19" height="13" fill="#eee"/><path d="M61 55l9.500 7 9.500-7" fill="none" stroke="#aaa"/></svg></div>
  <div class="dock-item dock-trash"><svg width="65" height="84" viewBox="0 0 65 84"><path d="M1 12l8 66a6 6 0 0 0 6 6h35a6 6 0 0 0 6-6l8-66z" fill="url(#gTrash)" stroke="#dcdcdc"/><ellipse cx="32.500" cy="12" rx="32" ry="9" fill="#dedede" stroke="#bbb"/><path d="M6 13L16 1l6 10L33 0l7 11 9-8 10 9-14 8H16z" fill="#fff"/><path d="M18 10l6 7 6-8 4 8 6-7 2 8H20z" fill="#5f6870"/><path d="M30 9l3 7 3-5z" fill="#d86a4a"/></svg></div>
</nav>
</body>
</html>
```

FILE: styles.css
```css
* { box-sizing: border-box; }
html, body { margin: 0; padding: 0; }
body {
  width: 2880px;
  height: 1800px;
  overflow: hidden;
  display: flex;
  flex-direction: column;
  font-family: "Liberation Sans", Arial, sans-serif;
  background: linear-gradient(100deg, #05002a 0%, #07012f 45%, #2a0d78 80%, #2a1080 100%);
}
.defs { position: absolute; }

/* macOS menu bar */
.menubar {
  flex: none;
  height: 50px;
  border-bottom: 2px solid #000;
  background: #e5e5e5;
  display: flex;
  align-items: center;
  padding: 0 37px 0 40px;
  font-size: 26px;
  color: #000;
}
.menus { display: flex; gap: 41.500px; margin-left: 41px; font-size: 27px; }
.menu-app { font-weight: 700; font-size: 26.500px; }
.status-icons { margin-left: auto; display: flex; align-items: center; }
.st-play { margin-left: 32px; }
.st-bt { margin-left: 42px; }
.st-pct { margin-left: 36px; font-size: 23px; }
.st-batt { margin-left: 10px; }
.st-wifi { margin-left: 37px; }
.st-search { margin-left: 36px; }
.st-cc { margin-left: 38px; }
.st-siri { margin-left: 34px; }
.st-date { margin-left: 33px; letter-spacing: .6px; }
.st-time { margin-left: 16px; letter-spacing: .6px; }

/* browser window */
.window {
  flex: none;
  position: relative;
  z-index: 2;
  height: 1583px;
  margin: 0 2px;
  border-top: 2px solid #b8b8b8;
  border-bottom: 1px solid #000;
  border-radius: 20px;
  overflow: hidden;
  display: flex;
  flex-direction: column;
  background: #fff;
  box-shadow: 0 1px 2px rgba(0, 0, 0, .6);
}
.tabstrip {
  flex: none;
  height: 82px;
  background: #464646;
  display: flex;
  align-items: flex-end;
  padding-left: 40px;
}
.lights {
  flex: none;
  align-self: flex-start;
  display: flex;
  gap: 17px;
  margin: 29px 43px 0 0;
}
.light {
  width: 23px;
  height: 24px;
  border-radius: 50%;
  border: 1.500px solid rgba(0, 0, 0, .25);
}
.light-r { background: #e0352a; }
.light-y { background: #9a7328; }
.light-g { background: #3f8c2b; }
.tab {
  flex: none;
  position: relative;
  width: 350px;
  height: 68px;
  display: flex;
  align-items: center;
  padding-left: 22px;
  font-size: 24px;
  letter-spacing: .2px;
  color: #ececec;
  --g: #5c6067;
  --c: #464646;
}
.tab::after {
  content: "";
  position: absolute;
  right: 0;
  top: 15px;
  height: 40px;
  border-right: 2px solid #7a7a7a;
}
.tab-active {
  background: #fff;
  color: #000;
  border-radius: 16px 16px 0 0;
  --g: #5f6368;
  --c: #fff;
}
.tab-active::after { display: none; }
.fav { flex: none; margin-right: 16px; }
.fav-g { margin-right: 20px; }
.gb { fill: var(--g); }
.gc { fill: var(--c); }
.title {
  flex: none;
  width: 224px;
  white-space: nowrap;
  -webkit-mask-image: linear-gradient(90deg, #000 196px, transparent 226px);
  mask-image: linear-gradient(90deg, #000 196px, transparent 226px);
}
.x { flex: none; margin-left: 15px; color: #f0f0f0; }
.tab-active .x { color: #000; }
.newtab { margin: 0 0 21px 27px; }
.tabmenu { margin: 0 0 26px 134px; }

.toolbar {
  flex: none;
  height: 66px;
  display: flex;
  align-items: center;
  padding: 8px 0 2px 10px;
  background: #fff;
}
.tb-btn {
  flex: none;
  width: 64px;
  display: flex;
  justify-content: center;
  align-items: center;
}
.tb-first { margin-left: 12px; }
.omnibox {
  flex: none;
  width: 2256px;
  height: 56px;
  margin-left: 12px;
  border: 1.500px solid #000;
  border-radius: 28px;
  background: #f1f3f4;
  display: flex;
  align-items: center;
  padding: 0 3px 0 22px;
}
.o-file { margin-left: 19px; font-size: 27px; color: #5f6368; }
.o-sep { width: 1.500px; height: 32px; margin: 0 19px 0 18px; background: #9aa0a6; }
.o-url { flex: 1; font-size: 29px; letter-spacing: .45px; color: #202124; }
.o-act { flex: none; width: 64px; display: flex; justify-content: center; }
.avatar {
  width: 44px;
  height: 44px;
  border-radius: 50%;
  background: #b0431f;
  color: #f5e6de;
  font-size: 24px;
  display: flex;
  align-items: center;
  justify-content: center;
}

.bookmarks {
  flex: none;
  height: 72px;
  border-bottom: 2px solid #000;
  background: #fff;
  display: flex;
  align-items: center;
  gap: 34px;
  padding: 0 0 2px 26px;
  font-size: 24.800px;
  color: #000;
}
.bm { display: flex; align-items: center; gap: 17px; }
.bm-yt { letter-spacing: -.4px; }
.bm-maps { margin-left: 7px; }
.bm-boot { margin-left: -4px; }
.news-g { font: 700 17px "Liberation Sans", sans-serif; fill: #fff; }
.word-w { font: 700 15px "Liberation Sans", sans-serif; fill: #fff; }

/* scheduler page */
.page {
  flex: 1;
  min-height: 0;
  overflow: hidden;
  background: #fff;
  padding: 0 0 0 411px;
  font-family: "Open Sans", sans-serif;
  color: #000;
}
.rows { margin-top: -80px; }
.row {
  display: grid;
  grid-template-columns: 172px 1710px 171px;
  height: 144px;
}
.hour {
  margin-top: 1px;
  padding-top: 2px;
  background: repeating-linear-gradient(90deg, #333 0 3px, transparent 3px 5px) top / 100% 2px no-repeat;
  text-align: center;
  font-size: 29px;
  line-height: 31px;
}
.desc {
  border-top: 1px solid #fff;
  border-left: 1.500px solid #000;
  padding: 13px 28px;
  font-size: 28.800px;
  line-height: 40px;
}
.past .desc { background: #d3d3d3; }
.present .desc { background: #ee7267; }
.future .desc { background: #90da81; }
.save {
  margin: 2px 0 0;
  padding: 0;
  border: 0;
  border-left: 1.500px solid #000;
  border-radius: 7px 30px 30px 7px;
  background: #4fa9d2;
  display: flex;
  align-items: center;
  justify-content: center;
}
.save-focus { box-shadow: 0 0 0 5px rgba(13, 80, 253, .2); }

/* editor status bar behind the window */
.statusbar {
  flex: none;
  height: 64px;
  margin: -23px 2px 0;
  padding: 0 46px;
  border-bottom: 2px solid #9a9a9a;
  border-radius: 0 0 20px 20px;
  background: linear-gradient(90deg, #2f6cab 0%, #24548a 4%, #24548a 96%, #2b66a8 100%);
  display: flex;
  align-items: flex-end;
  font-size: 36px;
  letter-spacing: .3px;
  color: #a9a9a9;
  line-height: 40px;
  white-space: nowrap;
}
.sb-group { display: flex; gap: 48px; padding-bottom: 8px; }
.sb-left { letter-spacing: 0; }
.sb-right { margin-left: auto; }
.sb-item { display: flex; align-items: center; gap: 18px; }
.sb-item svg { fill: none; stroke: #a9a9a9; stroke-width: 3; }
.sb-problems { gap: 16px; }
.sb-ln { letter-spacing: 0; font-size: 35.500px; }
.sb-js { letter-spacing: 0; gap: 16px; margin-left: -4px; }
.sb-live { letter-spacing: .8px; gap: 11px; }

/* dock */
.dock {
  flex: none;
  width: 2727px;
  height: 112px;
  margin: 4px 0 0 76px;
  padding: 14px 0 0 14px;
  border: 3px solid #ececec;
  border-radius: 34px;
  background: #c7c7c7;
  display: flex;
  align-items: flex-start;
  gap: 22px;
}
.dock-item {
  flex: none;
  position: relative;
  width: 72px;
  height: 72px;
  line-height: 0;
}
.dock-item.on::after {
  content: "";
  position: absolute;
  left: 32px;
  top: 83px;
  width: 8px;
  height: 9px;
  border-radius: 50%;
  background: #3a3a3a;
}
.dock-steam { margin-top: -5px; }
.dock-steam svg { margin-left: -5px; }
.dock-folder { width: 76px; }
.dock-doc { width: 85px; margin-left: -8px; }
.dock-trash { width: 65px; margin: -7px 0 0 -4px; }
.dock-sep { flex: none; width: 2px; height: 84px; background: #8a8a8a; margin-top: -3px; }
.dock-sep-a { margin-left: 10px; margin-right: 7px; }
.dock-sep-b { margin-left: 11px; margin-right: 6px; }
.badge {
  position: absolute;
  left: 47px;
  top: -9px;
  width: 34px;
  height: 35px;
  border-radius: 50%;
  background: #e8493f;
  color: #fff;
  font-size: 21px;
  line-height: 35px;
  text-align: center;
}
.s-big { font: italic 900 42px "Liberation Sans", sans-serif; fill: #fff; text-anchor: middle; }
.s-pro { font: 700 7px "Liberation Sans", sans-serif; fill: #c8402f; }
.cal-m { font: 700 15px "Liberation Sans", sans-serif; fill: #fff; text-anchor: middle; }
.cal-d { font: 300 44px Inter, sans-serif; fill: #222; text-anchor: middle; }
.tv { font: 700 30px "Liberation Sans", sans-serif; fill: #fff; }
.dev { font: 700 11px "Liberation Sans", sans-serif; fill: #fff; }
.w-big { font: 700 26px "Liberation Sans", sans-serif; fill: #fff; text-anchor: middle; }
```
